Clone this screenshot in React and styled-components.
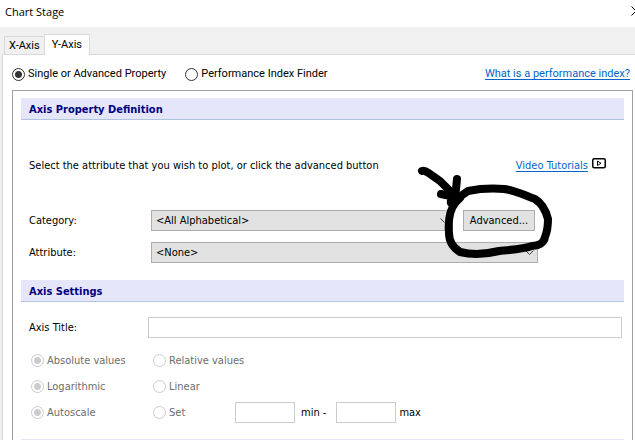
import React, { useState } from "react";
import styled, { createGlobalStyle } from "styled-components";

const GlobalStyle = createGlobalStyle`
  * {
    box-sizing: border-box;
  }
  body {
    margin: 0;
    background: #f0f0f0;
    color: #000;
    font-family: "DejaVu Sans Condensed", "DejaVu Sans", sans-serif;
    font-size: 11px;
    line-height: 16px;
    overflow: hidden;
  }
  button,
  input,
  select {
    font: inherit;
    color: inherit;
    margin: 0;
  }
`;

const TitleBar = styled.header`
  display: flex;
  align-items: flex-start;
  justify-content: space-between;
  height: 27px;
  background: #fff;
  h1 {
    margin: 0;
    padding: 4px 5px;
    font-family: "Open Sans", "Noto Sans", sans-serif;
    font-size: 11px;
    font-weight: 400;
  }
`;

const CloseButton = styled.button`
  width: 4px;
  padding: 6px 0 0;
  border: 0;
  background: none;
  overflow: hidden;
  svg {
    display: block;
  }
`;

const TabList = styled.nav`
  display: flex;
  align-items: flex-end;
  padding: 7px 4px 0;
`;

const Tab = styled.button`
  height: ${props => (props.$active ? 21 : 18)}px;
  margin-bottom: ${props => (props.$active ? -1 : 0)}px;
  padding: 0 ${props => (props.$active ? 7 : 4)}px;
  border: 1px solid #d9d9d9;
  border-bottom: 0;
  border-right-width: ${props => (props.$active ? 1 : 0)}px;
  background: ${props => (props.$active ? "#fff" : "#f0f0f0")};
  font-family: Roboto, sans-serif;
  font-size: 11px;
  line-height: 18px;
`;

const TabBody = styled.main`
  margin-left: 2px;
  padding: 11px 2px 0 9px;
  border: 1px solid #d9d9d9;
  border-width: 1px 0 0 1px;
  background: #fff;
`;

const ModeRow = styled.div`
  display: flex;
  align-items: center;
  gap: 19px;
  height: 16px;
  margin-bottom: 8px;
  padding-right: 3px;
  font-family: Roboto, sans-serif;
  font-size: 11px;
  a {
    margin-left: auto;
  }
`;

const Link = styled.a`
  color: #0066cc;
  text-decoration: underline;
  text-underline-offset: 2px;
`;

const RadioLabel = styled.label`
  display: flex;
  align-items: center;
  gap: 3px;
  color: ${props => (props.$disabled ? "#6d6d6d" : "#000")};
`;

const RadioInput = styled.input`
  appearance: none;
  flex: none;
  width: 13px;
  height: 13px;
  border: 1px solid #333;
  border-radius: 50%;
  background: #fff;
  &:checked {
    background: radial-gradient(circle, #333 3px, #fff 4px);
  }
  &:disabled {
    border-color: #ccc;
  }
  &:disabled:checked {
    background: radial-gradient(circle, #ccc 3px, #fff 4px);
  }
`;

const Panel = styled.div`
  padding: 7px 8px 0;
  border: 1px solid #a0a0a0;
  border-bottom: 0;
`;

const SectionTitle = styled.h2`
  height: 22px;
  margin: 0;
  padding: 4px 8px 0;
  border-bottom: 1px solid #b0c4de;
  background: #e6e6fa;
  color: #000080;
  font-size: 11px;
  font-weight: 700;
`;

const Intro = styled.div`
  display: flex;
  justify-content: space-between;
  padding: 38px 18px 36px 8px;
`;

const Tutorials = styled.div`
  display: flex;
  gap: 4px;
  svg {
    display: block;
  }
`;

const FieldRow = styled.div`
  display: grid;
  grid-template-columns: 122px 1fr auto;
  align-items: center;
  margin-bottom: ${props => props.$gap}px;
  padding: 0 ${props => props.$inset}px 0 8px;
`;

const SelectWrap = styled.div`
  display: grid;
  align-items: center;
  > * {
    grid-area: 1 / 1;
  }
  svg {
    justify-self: end;
    margin-right: 4px;
    pointer-events: none;
  }
`;

const SelectBox = styled.select`
  appearance: none;
  width: 100%;
  height: 21px;
  padding: 0 4px;
  border: 1px solid #adadad;
  border-radius: 0;
  background: #e1e1e1;
`;

const Marked = styled.div`
  position: relative;
  margin-left: 10px;
`;

const PushButton = styled.button`
  display: block;
  width: 72px;
  height: 21px;
  padding: 0;
  border: 1px solid #adadad;
  background: #e1e1e1;
`;

/* pen strokes lie over the button and the ends of both lists */
const Ink = styled.svg`
  position: absolute;
  z-index: 1;
  left: -63px;
  top: -50px;
  pointer-events: none;
`;

const TextInput = styled.input`
  width: ${props => props.$width};
  height: 21px;
  padding: 0 4px;
  border: 1px solid #ccc;
  background: #fff;
`;

const TitleRow = styled.div`
  display: grid;
  grid-template-columns: 119px 1fr;
  align-items: center;
  padding: 15px 2px 12px 8px;
`;

const OptionGrid = styled.div`
  display: grid;
  grid-template-columns: 122px 1fr;
  grid-auto-rows: 21px;
  align-items: center;
  row-gap: 5px;
  padding: 0 10px 16px;
`;

const Range = styled.div`
  display: flex;
  align-items: center;
  > label:first-child {
    width: 82px;
  }
`;

const Bound = styled.label`
  display: flex;
  align-items: center;
  gap: ${props => props.$gap}px;
  margin-right: 10px;
`;

const Chevron = () => (
  <svg width="9" height="6" viewBox="0 0 9 6" fill="none" stroke="#444">
    <path d="M0.5 0.5 4.5 4.5 8.5 0.5" />
  </svg>
);

const Radio = ({ children, ...rest }) => (
  <RadioLabel $disabled={rest.disabled}>
    <RadioInput type="radio" {...rest} />
    {children}
  </RadioLabel>
);

export default function App() {
  const [mode, setMode] = useState("single");
  return (
    <>
      <GlobalStyle />
      <TitleBar>
        <h1>Chart Stage</h1>
        <CloseButton aria-label="Close">
          <svg width="10" height="10" viewBox="0 0 10 10" stroke="#000">
            <path d="M0.5 0.5 9.5 9.5M9.5 0.5 0.5 9.5" />
          </svg>
        </CloseButton>
      </TitleBar>
      <TabList>
        <Tab>X-Axis</Tab>
        <Tab $active>Y-Axis</Tab>
      </TabList>
      <TabBody>
        <ModeRow>
          <Radio
            name="mode"
            checked={mode === "single"}
            onChange={() => setMode("single")}
          >
            Single or Advanced Property
          </Radio>
          <Radio
            name="mode"
            checked={mode === "finder"}
            onChange={() => setMode("finder")}
          >
            Performance Index Finder
          </Radio>
          <Link href="#index">What is a performance index?</Link>
        </ModeRow>
        <Panel>
          <SectionTitle>Axis Property Definition</SectionTitle>
          <Intro>
            <span>
              Select the attribute that you wish to plot, or click the advanced
              button
            </span>
            <Tutorials>
              <Link href="#videos">Video Tutorials</Link>
              <svg width="14" height="11" viewBox="0 0 14 11" fill="none">
                <rect
                  x="0.75"
                  y="0.75"
                  width="12.5"
                  height="9"
                  rx="1.5"
                  stroke="#000"
                  strokeWidth="1.5"
                />
                <path d="M5.5 3 9 5.25 5.5 7.5Z" stroke="#000" />
              </svg>
            </Tutorials>
          </Intro>
          <FieldRow $gap={11} $inset={89}>
            <label htmlFor="category">Category:</label>
            <SelectWrap>
              <SelectBox id="category">
                <option>&lt;All Alphabetical&gt;</option>
              </SelectBox>
              <Chevron />
            </SelectWrap>
            <Marked>
              <PushButton>Advanced...</PushButton>
              <Ink
                width="160"
                height="110"
                viewBox="400 160 160 110"
                fill="none"
                stroke="#000"
                strokeWidth="8"
                strokeLinecap="round"
                strokeLinejoin="round"
              >
                <path d="M422 171C425 170 427 172 430 174L440 181 446 187 453 194" />
                <path d="M457 179 456 189 455 197M441 194 455 197 451 201" />
                <path d="M451 203 458 198 468 191C478 189 490 188 504 189 514 190 524 195 535 199 543 204 546 211 548 219 548 226 547 232 545 237 544 243 538 246 532 246 524 249 509 250 499 251 487 254 472 255 460 252 452 247 449 241 449 233 448 221 450 209 456 202L460 198" />
              </Ink>
            </Marked>
          </FieldRow>
          <FieldRow $gap={17} $inset={86}>
            <label htmlFor="attribute">Attribute:</label>
            <SelectWrap>
              <SelectBox id="attribute">
                <option>&lt;None&gt;</option>
              </SelectBox>
              <Chevron />
            </SelectWrap>
          </FieldRow>
          <SectionTitle>Axis Settings</SectionTitle>
          <TitleRow>
            <label htmlFor="title">Axis Title:</label>
            <TextInput id="title" $width="100%" />
          </TitleRow>
          <OptionGrid>
            <Radio name="values" disabled defaultChecked>
              Absolute values
            </Radio>
            <Radio name="values" disabled>
              Relative values
            </Radio>
            <Radio name="scale" disabled defaultChecked>
              Logarithmic
            </Radio>
            <Radio name="scale" disabled>
              Linear
            </Radio>
            <Radio name="range" disabled defaultChecked>
              Autoscale
            </Radio>
            <Range>
              <Radio name="range" disabled>
                Set
              </Radio>
              <Bound $gap={6}>
                <TextInput $width="60px" disabled />
                min -
              </Bound>
              <Bound $gap={3}>
                <TextInput $width="60px" disabled />
                max
              </Bound>
            </Range>
          </OptionGrid>
          <SectionTitle as="div" />
        </Panel>
      </TabBody>
    </>
  );
}
